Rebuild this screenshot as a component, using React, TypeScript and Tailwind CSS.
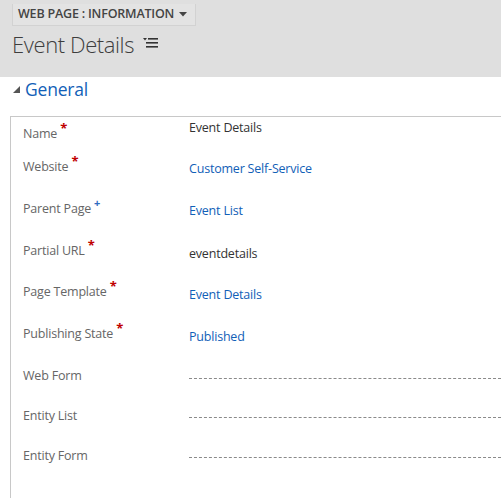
import React from "react";

type Row = {
  label: string;
  req?: "red" | "blue";
  value?: string;
  kind: "text" | "link" | "empty";
  rowCls: string;
  valCls: string;
};

const rows: Row[] = [
  { label: "Name", req: "red", value: "Event Details", kind: "text", rowCls: "h-[33px]", valCls: "mt-[-10px]" },
  { label: "Website", req: "red", value: "Customer Self-Service", kind: "link", rowCls: "h-[43px]", valCls: "mt-[-2px]" },
  { label: "Parent Page", req: "blue", value: "Event List", kind: "link", rowCls: "h-[41px]", valCls: "mt-[-3px]" },
  { label: "Partial URL", req: "red", value: "eventdetails", kind: "text", rowCls: "h-[41px]", valCls: "mt-[-1px]" },
  { label: "Page Template", req: "red", value: "Event Details", kind: "link", rowCls: "h-[42px]", valCls: "mt-[-1px]" },
  { label: "Publishing State", req: "red", value: "Published", kind: "link", rowCls: "h-[43px]", valCls: "mt-[-1px]" },
  { label: "Web Form", kind: "empty", rowCls: "h-[40px]", valCls: "mt-[2px]" },
  { label: "Entity List", kind: "empty", rowCls: "h-[40px]", valCls: "mt-[1px]" },
  { label: "Entity Form", kind: "empty", rowCls: "h-[40px]", valCls: "mt-[1px]" },
];

function MenuIcon() {
  return (
    <svg width="16" height="12" viewBox="0 0 16 12" className="ml-[9px] mt-[7px]">
      <polygon points="0,1 4,1 2,3.5" fill="#333" />
      <rect x="5" y="1" width="10" height="1.6" fill="#333" />
      <rect x="3" y="5" width="12" height="1.6" fill="#333" />
      <rect x="3" y="9" width="12" height="1.6" fill="#333" />
    </svg>
  );
}

export default function App() {
  return (
    <div
      className="w-[501px] h-[498px] overflow-hidden bg-white"
      style={{ fontFamily: '"Open Sans", "Noto Sans", "Liberation Sans", sans-serif' }}
    >
      <div className="h-[77px] bg-[#dfdfdf] px-[12px]">
        <div className="inline-flex items-center h-[22px] pl-[5px] pr-[8px] bg-[#e3e3e3] border-b border-r border-l border-[#d2d2d2] text-[12.5px] font-semibold text-[#444] tracking-[-0.2px]">
          WEB PAGE : INFORMATION
          <svg width="8" height="5" viewBox="0 0 8 5" className="ml-[5px]">
            <polygon points="0,0 8,0 4,4.5" fill="#444" />
          </svg>
        </div>
        <div className="flex items-start mt-[4px]">
          <span className="text-[22px] font-light text-[#3d3d3d] leading-[28px] tracking-[-0.4px]">
            Event Details
          </span>
          <MenuIcon />
        </div>
      </div>

      <div className="flex items-center h-[27px] mt-[-2px] pl-[13px]">
        <svg width="7" height="7" viewBox="0 0 7 7" className="mt-[2px]">
          <polygon points="7,0 7,7 0,7" fill="#555" />
        </svg>
        <span className="ml-[5px] text-[17.5px] text-[#1160b7] leading-[24px] tracking-[-0.2px]">General</span>
      </div>

      <div className="ml-[10px] mt-[14px] border-t border-l border-[#c8c8c8] pt-[7px] h-[400px]">
        {rows.map((r) => (
          <div key={r.label} className={`flex items-start ${r.rowCls}`}>
            <div className="w-[178px] shrink-0 pl-[12px] text-[12.5px] leading-[18px] text-[#666] tracking-[-0.2px]">
              {r.label}
              {r.req === "red" && (
                <span className="relative top-[-5px] ml-[3px] text-[13px] font-bold text-[#c00000]">*</span>
              )}
              {r.req === "blue" && (
                <span className="relative top-[-6px] ml-[3px] text-[11px] font-bold text-[#2f6cc0]">+</span>
              )}
            </div>
            <div className={`flex-1 ${r.valCls}`}>
              {r.kind === "empty" ? (
                <div className="mt-[9px] border-b border-dashed border-[#8a8a8a] w-full" />
              ) : (
                <span
                  className={`text-[12.5px] leading-[18px] tracking-[-0.2px] ${
                    r.kind === "link" ? "text-[#1160b7]" : "text-[#333]"
                  }`}
                >
                  {r.value}
                </span>
              )}
            </div>
          </div>
        ))}
      </div>
    </div>
  );
}
